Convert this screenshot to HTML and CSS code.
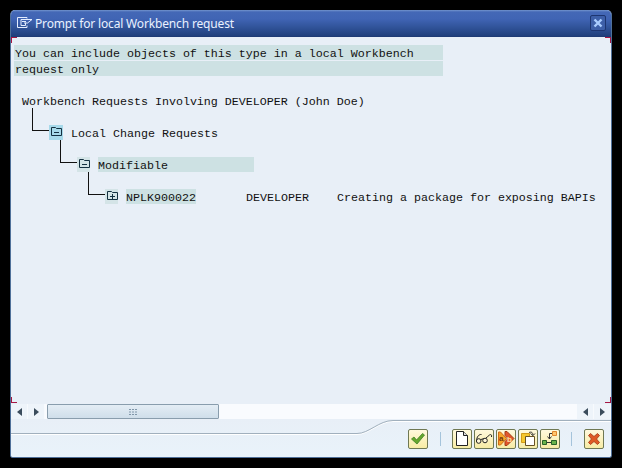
FILE: index.html
```html
<!DOCTYPE html>
<html lang="en">
<head>
<meta charset="utf-8">
<title>Prompt for local Workbench request</title>
<link rel="stylesheet" href="styles.css">
</head>
<body>
<main class="dialog">
  <header class="titlebar">
    <svg class="title-icon" width="16" height="12" viewBox="0 0 16 12"><path d="M10 1.500V.5H.5v10H10V8.500M4 2.500h11L10.500 6H8M4 2.500V8.500h4.500V6H7M5 4.500h4"/></svg>
    <h1>Prompt for local Workbench request</h1>
    <button class="close" aria-label="Close"><svg width="10" height="10" viewBox="0 0 10 10"><path d="M1.500 1.500l7 7m0-7l-7 7"/></svg></button>
  </header>
  <section class="content">
    <i class="corner tl"></i><i class="corner tr"></i><i class="corner bl"></i><i class="corner br"></i>
    <div class="notice"><p>You can include objects of this type in a local Workbench</p><p>request only</p></div>
    <div class="tree">
      <div class="root">Workbench Requests Involving DEVELOPER (John Doe)</div>
      <div class="node level1"><i class="elbow"></i><span class="folder selected"><svg width="14" height="14" viewBox="0 0 14 14"><path d="M2.500 10.500v-8h4l1 1h5v7zM5 7.500h5"/></svg></span><span class="label">Local Change Requests</span></div>
      <div class="node level2"><i class="elbow"></i><span class="folder"><svg width="14" height="14" viewBox="0 0 14 14"><path d="M2.500 10.500v-8h4l1 1h5v7zM5 7.500h5"/></svg></span><span class="label mark wide">Modifiable</span></div>
      <div class="node level3"><i class="elbow"></i><span class="folder"><svg width="14" height="14" viewBox="0 0 14 14"><path d="M2.500 10.500v-8h4l1 1h5v7zM5 7.500h5M7.500 5v5"/></svg></span><span class="label mark">NPLK900022</span><span class="owner">DEVELOPER</span><span class="description">Creating a package for exposing BAPIs</span></div>
    </div>
  </section>
  <div class="scrollbar">
    <span class="arrow"><svg width="5" height="8" viewBox="0 0 5 8"><path d="M5 0v8L0 4z"/></svg></span>
    <span class="arrow"><svg width="5" height="8" viewBox="0 0 5 8"><path d="M0 0v8l5-4z"/></svg></span>
    <div class="track"><div class="thumb"><svg width="9" height="6" viewBox="0 0 9 6"><path d="M0 .5h9M0 3h9M0 5.500h9"/></svg></div></div>
    <span class="arrow"><svg width="5" height="8" viewBox="0 0 5 8"><path d="M5 0v8L0 4z"/></svg></span>
    <span class="arrow"><svg width="5" height="8" viewBox="0 0 5 8"><path d="M0 0v8l5-4z"/></svg></span>
  </div>
  <footer class="footer">
    <svg class="curve" width="600" height="37" viewBox="0 0 600 37"><path class="shine" d="M0 14.500h346c12 0 22-13 36-13h218"/><path class="edge" d="M0 13.500h346c12 0 22-13 36-13h218"/></svg>
    <div class="actions">
      <button aria-label="Continue"><svg viewBox="0 0 20 20"><path d="M3.500 10l2.500-2 2.500 3 6-6.500 2 1.500-7.500 9z" fill="#65a72d" stroke="#3f8027" stroke-width=".8"/></svg></button>
      <i class="separator first"></i>
      <button aria-label="Create"><svg viewBox="0 0 20 20"><path d="M4.500 2.500h7l4 4v10h-11z" fill="#fff" stroke="#222"/><path d="M11.500 2.500v4h4" fill="#ddd" stroke="#222"/></svg></button>
      <button aria-label="Display"><svg viewBox="0 0 20 20"><path d="M7.500 5.500C5 5 2.500 8 2.500 12M17.500 8c.5-2-.5-3-2-2-1.500 1-2 2-3.500 3M7 10.500l3-1" fill="none" stroke="#222"/><circle cx="4.700" cy="12" r="2.300" fill="#fff8d8" stroke="#222"/><circle cx="11" cy="11.500" r="2.300" fill="#fff8d8" stroke="#222"/></svg></button>
      <button aria-label="Rename"><svg viewBox="0 0 20 20"><path d="M9 2.500h2l7 7-7 7H9v-4l3-3-3-3z" fill="#e3562b" stroke="#a23c18"/><path d="M2.500 3h2l6 6.500-6 6.500h-2z" fill="#f7a528" stroke="#d06a19"/><text x="3" y="12.300" class="letter">a</text><text x="11" y="12.700" class="letter light">b</text></svg></button>
      <button aria-label="Copy"><svg viewBox="0 0 20 20"><path d="M3.500 4.500h8v9h-8z" fill="#f5c72e" stroke="#d19b19"/><path d="M7.500 7.500h9v9h-9z" fill="#fff" stroke="#665224"/><path d="M11 3.500c2.500-1 4 0 4 3M12.500 4.500l2.500 2 2-2" fill="none" stroke="#333"/></svg></button>
      <button aria-label="Hierarchy"><svg viewBox="0 0 20 20"><path d="M12 4.500H9.500V10M7.500 7.500l2 2.500 2-2.500M7 13.500h5" fill="none" stroke="#333"/><path d="M12.500 2.500h4v4h-4z" fill="#ffc66e" stroke="#e1862b"/><path d="M2.500 11.500h4v4h-4zM11.500 11.500h5v4h-5z" fill="#69b34a" stroke="#286328"/></svg></button>
      <i class="separator second"></i>
      <button aria-label="Cancel"><svg viewBox="0 0 20 20"><path d="M4.500 6.500l2-2L10 7.500l3.500-3 2 2L12.500 10l3 3.500-2 2L10 12.500l-3.500 3-2-2 3-3.500z" fill="#df5a24" stroke="#a83d1c" stroke-width=".9"/></svg></button>
    </div>
  </footer>
</main>
</body>
</html>
```
FILE: styles.css
```css
* { box-sizing: border-box; }
body { margin: 0; padding: 10px; height: 468px; background: #000; overflow: hidden; }
h1, p { margin: 0; }
svg { display: block; flex: none; }
button { padding: 0; font: inherit; }
.dialog { width: 602px; height: 448px; display: flex; flex-direction: column; overflow: hidden; background: #e8eff7; border: 1px solid #4f7099; border-top: 0; border-radius: 5px 5px 3px 3px; }
.titlebar { height: 27px; flex: none; display: flex; align-items: center; padding: 0 5px 0 6px; background: linear-gradient(#7395cd 0, #4468b6 2px, #4064b4 9px, #31549a 17px, #203f7c 26px, #1d376f); }
.title-icon { fill: none; stroke: #e4edff; margin-top: -1px; }
h1 { flex: 1; margin-left: 2px; color: #e9f1ff; font: 12px/20px "Noto Sans", sans-serif; letter-spacing: -.16px; white-space: nowrap; }
.close { width: 16px; height: 16px; display: grid; place-items: center; background: #3d5fa8; border: 1px solid #1d3570; border-radius: 2px; margin-top: -1px; }
.close svg { fill: none; stroke: #a9ccff; stroke-width: 2.4; }
.content { position: relative; height: 367px; flex: none; padding: 8px 0 0 3px; color: #111; font: 11.667px/18px "Liberation Mono", monospace; white-space: nowrap; background: #e8eff7; }
.notice { width: 429px; }
.notice p { height: 15px; margin-bottom: 1px; padding-left: 1px; background: #cde1e3; }
.tree { padding-top: 16px; }
.root { padding-left: 8px; height: 16px; }
.node { display: flex; align-items: flex-end; height: 32px; }
.level1 { padding-left: 18px; }
.level2 { padding-left: 46px; }
.level3 { padding-left: 74px; }
.elbow { width: 17px; height: 23px; flex: none; align-self: flex-start; margin-top: -1px; border: solid #111; border-width: 0 0 1px 1px; }
.folder { width: 14px; height: 15px; margin-bottom: 1px; background: #d4e4e7; }
.folder.selected { background: #a7d9ea; }
.folder svg { fill: none; stroke: #143041; }
.label { margin-left: 7px; height: 16px; padding-left: 1px; }
.level2 .folder, .level3 .folder { width: 13px; }
.label.mark { height: 15px; margin-bottom: 1px; margin-left: 8px; padding-left: 0; background: #cde1e3; width: 70px; }
.label.mark.wide { width: 156px; }
.owner { width: 91px; height: 16px; margin-left: 50px; }
.description { height: 16px; }
.corner { position: absolute; width: 6px; height: 6px; border: 0 solid #a71743; }
.tl { left: 0; top: 0; border-width: 1px 0 0 1px; }
.tr { right: 0; top: 0; border-width: 1px 1px 0 0; }
.bl { left: 0; bottom: 1px; border-width: 0 0 1px 1px; }
.br { right: 0; bottom: 1px; border-width: 0 1px 1px 0; }
.scrollbar { display: flex; height: 15px; flex: none; background: #f9fbfe; }
.arrow { display: grid; place-items: center; width: 17px; background: #eef4fa; border-right: 1px solid #f7fafd; }
.arrow path { fill: #3b4c5c; }
.track { flex: 1; padding-left: 2px; }
.thumb { width: 172px; height: 15px; display: grid; place-items: center; border: 1px solid #899dad; border-radius: 1px; background: linear-gradient(#e4edf5, #cfdeea); }
.thumb path { fill: none; stroke: #8096a9; stroke-dasharray: 2 1; }
.footer { position: relative; flex: 1; background: linear-gradient(#e8eff7, #e9f3fa); }
.curve { position: absolute; top: 1px; left: 0; fill: none; }
.edge { stroke: #a1b0bd; }
.shine { stroke: #fff; }
.actions { position: relative; display: flex; justify-content: flex-end; gap: 2px; padding: 10px 7px 0 0; }
.actions button { width: 20px; height: 20px; overflow: hidden; background: linear-gradient(#fff9dd, #f7eca5); border: 1px solid #6f7853; border-radius: 2px; }
.actions button svg { width: 20px; height: 20px; margin: -1px; }
.separator { width: 1px; height: 14px; margin-top: 3px; background: #a5c4db; }
.first { margin-left: 10px; margin-right: 9px; }
.second { margin: 3px 10px 0 9px; }
.letter { font: bold 8px "Liberation Sans", sans-serif; fill: #71330d; }
.light { fill: #ffe0a7; }
```
